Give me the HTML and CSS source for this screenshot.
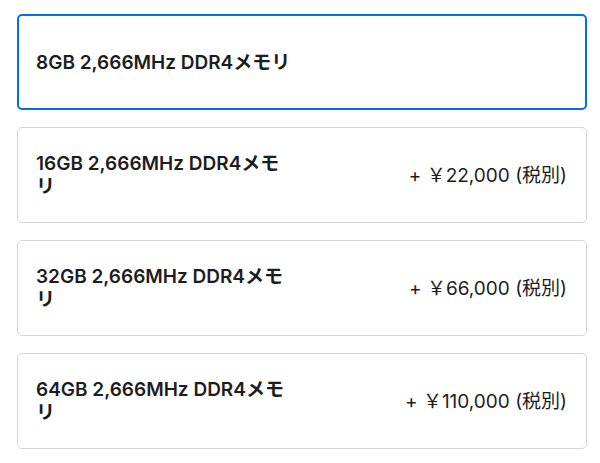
FILE: index.html
```html
<!DOCTYPE html>
<html lang="ja">
<head>
<meta charset="utf-8">
<link rel="stylesheet" href="styles.css">
</head>
<body>
<div class="options">
  <div class="card selected">
    <span class="title full">8GB 2,666MHz DDR4メモリ</span>
  </div>
  <div class="card">
    <span class="title">16GB 2,666MHz DDR4メモリ</span>
    <span class="price">+ ￥22,000 (税別)</span>
  </div>
  <div class="card">
    <span class="title">32GB 2,666MHz DDR4メモリ</span>
    <span class="price">+ ￥66,000 (税別)</span>
  </div>
  <div class="card">
    <span class="title">64GB 2,666MHz DDR4メモリ</span>
    <span class="price">+ ￥110,000 (税別)</span>
  </div>
</div>
</body>
</html>
```

FILE: styles.css
```css
html, body {
  margin: 0;
  padding: 0;
  background: #ffffff;
}
body {
  font-family: "Inter", "Noto Sans CJK JP", sans-serif;
  color: #1d1d1f;
}
.options {
  padding: 14px 13px 0 17px;
  display: flex;
  flex-direction: column;
  gap: 17px;
}
.card {
  box-sizing: border-box;
  height: 96px;
  border: 1px solid #d6d6d6;
  border-radius: 5px;
  padding: 0 19px 0 18px;
  display: flex;
  align-items: center;
  justify-content: space-between;
}
.card.selected {
  border: 2px solid #0071e3;
  padding: 0 18px 0 17px;
}
.title {
  font-size: 19px;
  font-weight: 600;
  line-height: 23px;
  width: 255px;
}
.title.full {
  width: auto;
}
.price {
  font-size: 19px;
  font-weight: 400;
  line-height: 23px;
  color: #1d1d1f;
}
```
